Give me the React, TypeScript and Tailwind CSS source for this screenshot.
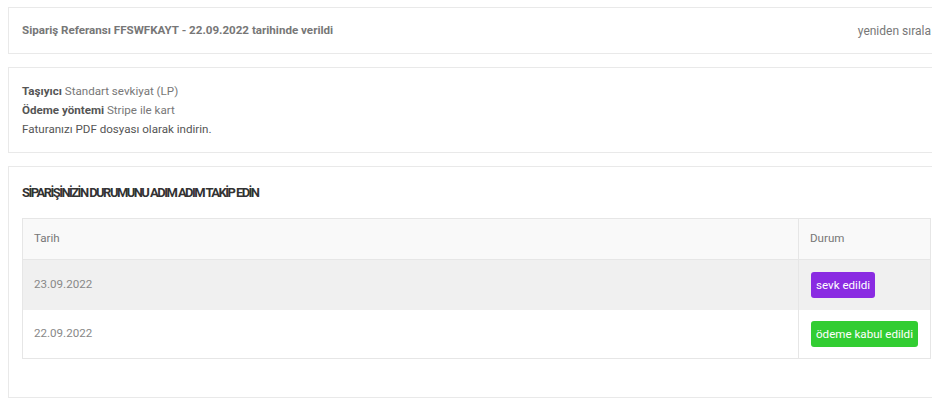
import React from "react";

export default function App() {
  return (
    <div
      className="w-[932px] h-[400px] overflow-hidden bg-white text-[11.6px] text-[#777]"
      style={{ fontFamily: "Roboto, 'Liberation Sans', sans-serif" }}
    >
      <div className="w-[937px] ml-[8px] pt-[7px] flex flex-col gap-[13px]">
        <div className="border border-[#e9e9e9] h-[47px] px-[13px] flex items-center justify-between">
          <span className="font-bold text-[#777]">
            Sipariş Referansı FFSWFKAYT - 22.09.2022 tarihinde verildi
          </span>
          <span className="text-[#777] text-[12px]">yeniden sırala</span>
        </div>
        <div className="border border-[#e9e9e9] h-[86px] px-[13px] pt-[14px] leading-[19px]">
          <div>
            <span className="font-bold text-[#555]">Taşıyıcı</span> Standart sevkiyat (LP)
          </div>
          <div>
            <span className="font-bold text-[#555]">Ödeme yöntemi</span> Stripe ile kart
          </div>
          <div className="text-[#555]">Faturanızı PDF dosyası olarak indirin.</div>
        </div>
        <div className="border border-[#e9e9e9] h-[232px] px-[13px] pt-[18px]">
          <h3 className="font-bold text-[13px] text-[#333] tracking-[-1.55px] leading-[16px] uppercase">
            SİPARİŞİNİZİN DURUMUNU ADIM ADIM TAKİP EDİN
          </h3>
          <table className="mt-[17px] w-[909px] border-collapse border border-[#e6e6e6]">
            <thead>
              <tr className="bg-[#f9f9f9] h-[41px]">
                <th className="text-left font-normal px-[11px] border border-[#e6e6e6] text-[#777]">Tarih</th>
                <th className="text-left font-normal px-[11px] border border-[#e6e6e6] w-[132px] text-[#777]">Durum</th>
              </tr>
            </thead>
            <tbody>
              <tr className="bg-[#f0f0f0] h-[50px]">
                <td className="px-[11px] border-x border-[#e6e6e6] text-[#888]">23.09.2022</td>
                <td className="px-[12px] border-x border-[#e6e6e6]">
                  <span className="inline-block whitespace-nowrap bg-[#8a2be2] text-white rounded-[3px] px-[5px] leading-[26px]">
                    sevk edildi
                  </span>
                </td>
              </tr>
              <tr className="bg-white h-[49px]">
                <td className="px-[11px] border-x border-b border-[#e6e6e6] text-[#888]">22.09.2022</td>
                <td className="px-[12px] border-x border-b border-[#e6e6e6]">
                  <span className="inline-block whitespace-nowrap bg-[#32cd32] text-white rounded-[3px] px-[5px] leading-[26px]">
                    ödeme kabul edildi
                  </span>
                </td>
              </tr>
            </tbody>
          </table>
        </div>
      </div>
    </div>
  );
}
